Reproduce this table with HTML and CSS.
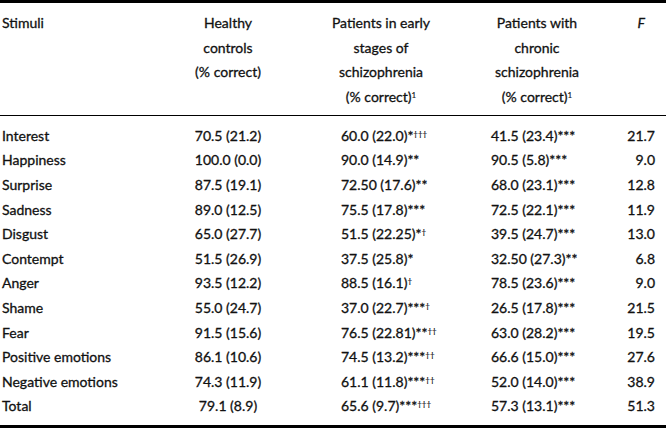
FILE: index.html
```html
<!DOCTYPE html>
<html>
<head>
<meta charset="utf-8">
<link rel="stylesheet" href="styles.css">
</head>
<body>
<div class="table">
  <div class="head grid">
    <div class="cell label">Stimuli</div>
    <div class="cell hc">Healthy<br>controls<br>(% correct)</div>
    <div class="cell hc">Patients in early<br>stages of<br>schizophrenia<br>(% correct)<sup class="n">1</sup></div>
    <div class="cell hc">Patients with<br>chronic<br>schizophrenia<br>(% correct)<sup class="n">1</sup></div>
    <div class="cell hf"><i>F</i></div>
  </div>
  <div class="body grid">
    <div class="cell label">Interest</div><div class="cell c1">70.5 (21.2)</div><div class="cell c2">60.0 (22.0)*<sup>†††</sup></div><div class="cell c3">41.5 (23.4)***</div><div class="cell f">21.7</div>
    <div class="cell label">Happiness</div><div class="cell c1">100.0 (0.0)</div><div class="cell c2">90.0 (14.9)**</div><div class="cell c3">90.5 (5.8)***</div><div class="cell f">9.0</div>
    <div class="cell label">Surprise</div><div class="cell c1">87.5 (19.1)</div><div class="cell c2">72.50 (17.6)**</div><div class="cell c3">68.0 (23.1)***</div><div class="cell f">12.8</div>
    <div class="cell label">Sadness</div><div class="cell c1">89.0 (12.5)</div><div class="cell c2">75.5 (17.8)***</div><div class="cell c3">72.5 (22.1)***</div><div class="cell f">11.9</div>
    <div class="cell label">Disgust</div><div class="cell c1">65.0 (27.7)</div><div class="cell c2">51.5 (22.25)*<sup>†</sup></div><div class="cell c3">39.5 (24.7)***</div><div class="cell f">13.0</div>
    <div class="cell label">Contempt</div><div class="cell c1">51.5 (26.9)</div><div class="cell c2">37.5 (25.8)*</div><div class="cell c3">32.50 (27.3)**</div><div class="cell f">6.8</div>
    <div class="cell label">Anger</div><div class="cell c1">93.5 (12.2)</div><div class="cell c2">88.5 (16.1)<sup>†</sup></div><div class="cell c3">78.5 (23.6)***</div><div class="cell f">9.0</div>
    <div class="cell label">Shame</div><div class="cell c1">55.0 (24.7)</div><div class="cell c2">37.0 (22.7)***<sup>†</sup></div><div class="cell c3">26.5 (17.8)***</div><div class="cell f">21.5</div>
    <div class="cell label">Fear</div><div class="cell c1">91.5 (15.6)</div><div class="cell c2">76.5 (22.81)**<sup>††</sup></div><div class="cell c3">63.0 (28.2)***</div><div class="cell f">19.5</div>
    <div class="cell label">Positive emotions</div><div class="cell c1">86.1 (10.6)</div><div class="cell c2">74.5 (13.2)***<sup>††</sup></div><div class="cell c3">66.6 (15.0)***</div><div class="cell f">27.6</div>
    <div class="cell label">Negative emotions</div><div class="cell c1">74.3 (11.9)</div><div class="cell c2">61.1 (11.8)***<sup>††</sup></div><div class="cell c3">52.0 (14.0)***</div><div class="cell f">38.9</div>
    <div class="cell label">Total</div><div class="cell c1">79.1 (8.9)</div><div class="cell c2">65.6 (9.7)***<sup>†††</sup></div><div class="cell c3">57.3 (13.1)***</div><div class="cell f">51.3</div>
  </div>
</div>
</body>
</html>
```
FILE: styles.css
```css
html, body {
  margin: 0;
  padding: 0;
  background: #ffffff;
}
body {
  font-family: Lato, "Open Sans", sans-serif;
  font-size: 14px;
  color: #111111;
  -webkit-text-stroke: 0.3px #111111;
}
.table {
  width: 666px;
  border-top: 3px solid #000;
  border-bottom: 3px solid #000;
  height: 428px;
  box-sizing: border-box;
}
.grid {
  display: grid;
  grid-template-columns: 168px 116px 190px 122px 57px;
  padding-left: 2px;
  line-height: 24.6px;
}
.head {
  padding-top: 8px;
  padding-bottom: 5.5px;
  border-bottom: 1px solid #000;
}
.body {
  padding-top: 8px;
}
.cell {
  white-space: nowrap;
}
.hc {
  text-align: center;
}
.hf {
  text-align: right;
  padding-right: 10px;
}
.c1 {
  text-align: center;
}
.c2 {
  padding-left: 55px;
}
.c3 {
  padding-left: 15px;
}
.f {
  text-align: right;
}
sup {
  font-size: 8px;
  line-height: 0;
  vertical-align: 4px;
  -webkit-text-stroke: 0.15px #111111;
}
sup.n {
  font-size: 8px;
}
```
